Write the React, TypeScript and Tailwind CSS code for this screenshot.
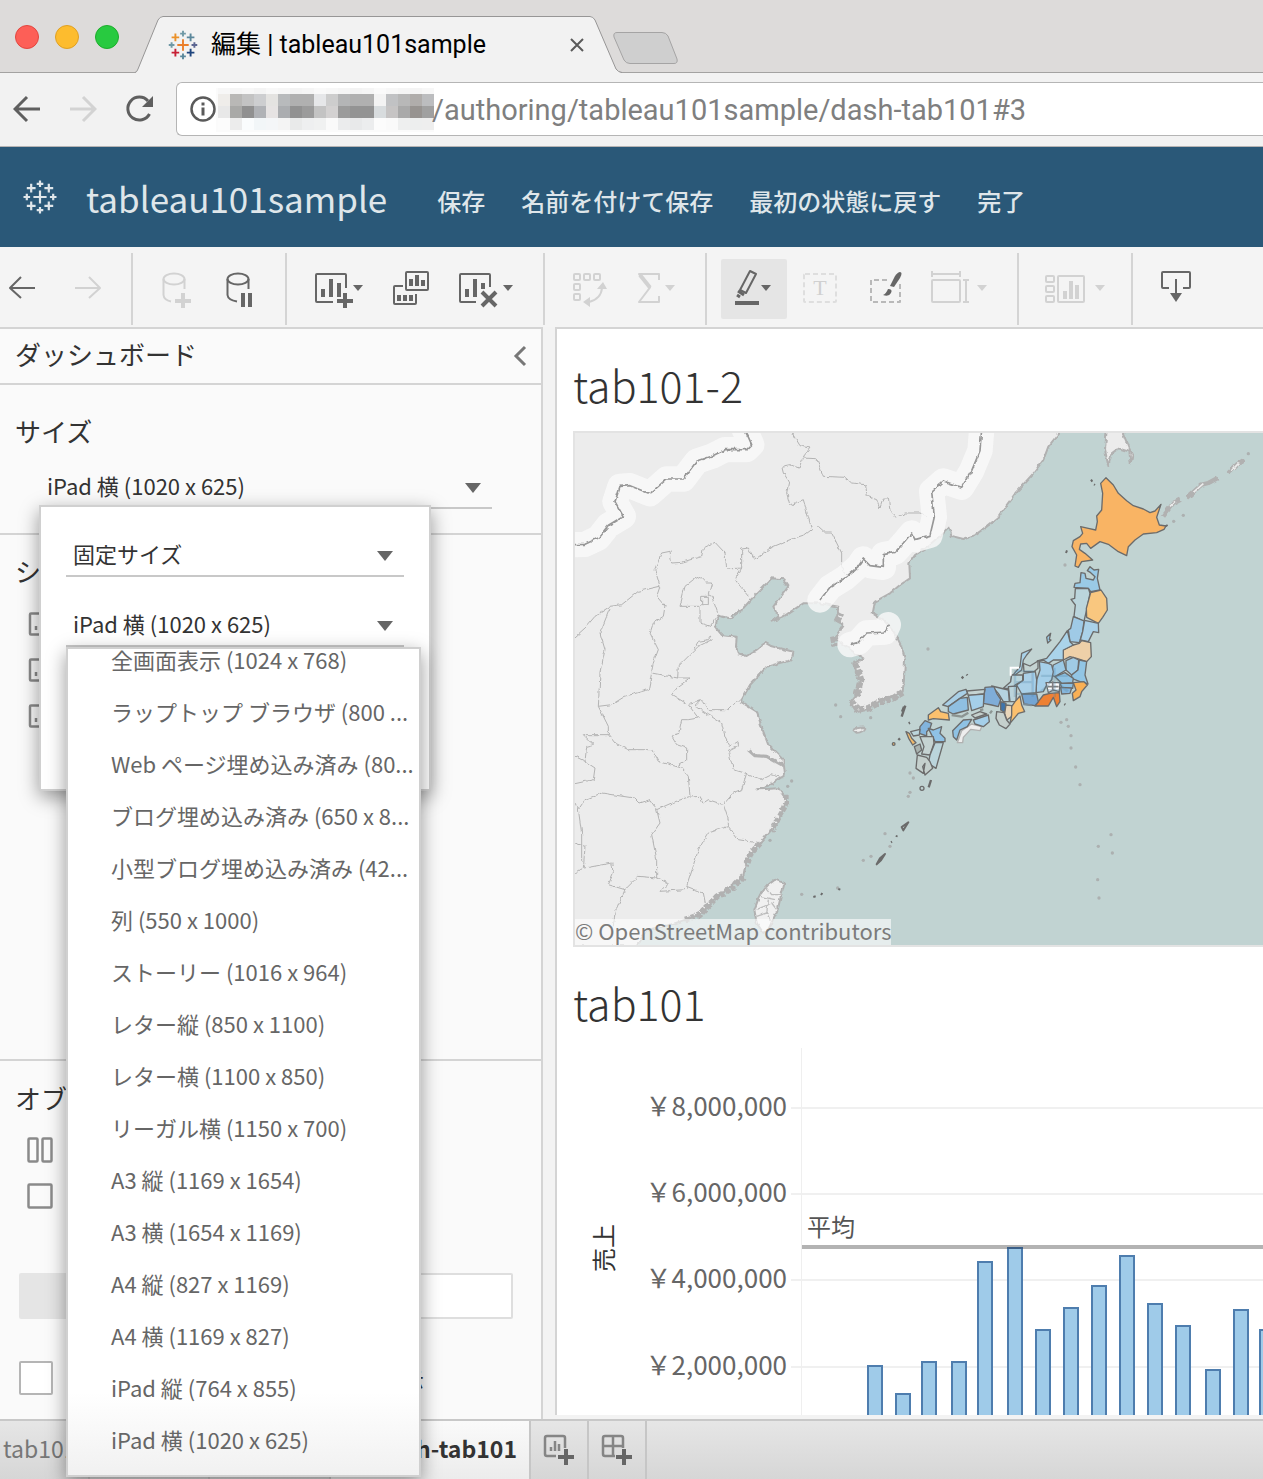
import { useState, type ReactNode } from "react";
import clsx from "clsx";

const sizeOptions = [
  "全画面表示 (1024 x 768)",
  "ラップトップ ブラウザ (800 ...",
  "Web ページ埋め込み済み (80...",
  "ブログ埋め込み済み (650 x 8...",
  "小型ブログ埋め込み済み (42...",
  "列 (550 x 1000)",
  "ストーリー (1016 x 964)",
  "レター縦 (850 x 1100)",
  "レター横 (1100 x 850)",
  "リーガル横 (1150 x 700)",
  "A3 縦 (1169 x 1654)",
  "A3 横 (1654 x 1169)",
  "A4 縦 (827 x 1169)",
  "A4 横 (1169 x 827)",
  "iPad 縦 (764 x 855)",
  "iPad 横 (1020 x 625)",
];

const menuItems = ["保存", "名前を付けて保存", "最初の状態に戻す", "完了"];

/* ---------- Browser window ---------- */

const mosaic = [
  ["#f7f7f7", "#f5f5f5", "#f7f7f7", "#f4f4f4", "#f8f8f8", "#f6f6f6", "#f3f3f3", "#f5f5f5", "#f9f9f9", "#f7f7f7", "#f5f5f5", "#f3f3f3", "#f5f5f5", "#fafafa", "#f7f7f7", "#f5f5f5", "#f4f4f4", "#f7f7f7"],
  ["#efedea", "#b9b8b6", "#c3c3c3", "#cdced0", "#e4e3e1", "#b8babc", "#b0b0b0", "#b0b0b0", "#e6e7e9", "#cdcdcd", "#b4b5b6", "#b0b0b0", "#b0b0b0", "#f3f3f3", "#c1c2c4", "#b8b8b8", "#b0adab", "#bcbdbf"],
  ["#e8e8e8", "#a9a9a7", "#909090", "#b0b2b6", "#e6e3e3", "#abadb0", "#919191", "#9b9b9b", "#c3c3c3", "#d3d1d1", "#9b9b9b", "#939393", "#939393", "#d8dcde", "#c6c4c4", "#a9a9a9", "#979390", "#a0a0a0"],
  ["#fcfcfc", "#ececec", "#fafcfd", "#f2f6f8", "#f4f6f8", "#f4f4f4", "#e9eaea", "#eeeff0", "#f0f1f1", "#fafafa", "#ebeced", "#e8e9ea", "#ecedee", "#fcfcfc", "#fafafa", "#eeefef", "#edeeee", "#eeeeee"],
];

const crosses = [
  { x: 20, y: 20, r: 6, color: "#eb7f2b" },
  { x: 12, y: 12, r: 4, color: "#eb9129" },
  { x: 28, y: 12, r: 4, color: "#5b879b" },
  { x: 12, y: 28, r: 4, color: "#c72035" },
  { x: 28, y: 28, r: 4, color: "#1f457e" },
  { x: 20, y: 8, r: 3, color: "#7099a6" },
  { x: 20, y: 32, r: 3, color: "#59879b" },
  { x: 8, y: 20, r: 3, color: "#7099a6" },
  { x: 32, y: 20, r: 3, color: "#5c6692" },
];

function TableauMark({ className, color }: { className: string; color?: string }) {
  return (
    <svg viewBox="0 0 40 40" className={className} aria-hidden="true">
      {crosses.map((c) => (
        <path
          key={`${c.x}-${c.y}`}
          d={`M${c.x - c.r} ${c.y}h${c.r * 2}M${c.x} ${c.y - c.r}v${c.r * 2}`}
          stroke={color ?? c.color}
          strokeWidth="2"
        />
      ))}
    </svg>
  );
}

function TabStrip() {
  return (
    <div className="relative flex h-[73px] bg-[#dddbda] border-b border-[#a3a2a1]">
      <div className="flex gap-4 pl-[15px] pt-[25px]">
        <span className="size-6 rounded-full border border-[#e2463f] bg-[#fd5f57]" />
        <span className="size-6 rounded-full border border-[#dfa023] bg-[#fdbc2e]" />
        <span className="size-6 rounded-full border border-[#1dad2b] bg-[#28ca40]" />
      </div>
      <div className="relative -mb-px ml-4 h-[73px] w-[487px]">
        <svg viewBox="0 0 487 73" className="absolute inset-0 size-full" aria-hidden="true">
          <path d="M0 73Q2 72 3 69L23 20Q25 16 28 16H455Q458 16 460 20L481 69Q483 72 487 73Z" fill="#f2f2f2" />
          <path d="M0 72.500Q2 72 3 69L23 20Q25 16.500 28 16.500H455Q458 16.500 460 20L481 69Q483 72 487 72.500" fill="none" stroke="#979696" />
        </svg>
        <div className="relative flex h-full items-center pl-[29px] pt-4">
          <TableauMark className="size-[38px]" />
          <span className="ml-[9px] text-[25px] leading-8 text-black">編集 | tableau101sample</span>
          <button aria-label="閉じる" className="absolute right-[37px] top-[37px]">
            <svg width="16" height="16" viewBox="0 0 16 16" aria-hidden="true">
              <path d="M2 2 14 14M14 2 2 14" stroke="#5a5a5a" strokeWidth="2" />
            </svg>
          </button>
        </div>
      </div>
      <button aria-label="新しいタブ" className="-ml-[10px] mt-[31px] h-[34px]">
        <svg width="68" height="34" viewBox="0 0 68 34" aria-hidden="true">
          <path d="M5 1.500H50Q54 1.500 56 5L65 28Q66 32.500 62 32.500H18Q14 32.500 12 29L2 6Q1 1.500 5 1.500Z" fill="#cfcfcf" stroke="#a5a4a4" />
        </svg>
      </button>
    </div>
  );
}

function AddressBar() {
  return (
    <div className="flex h-[74px] items-center border-b border-[#b6b4b4] bg-[#f2f2f2] pb-0.5 pl-[13px]">
      <button aria-label="戻る">
        <svg width="28" height="28" viewBox="0 0 28 28" fill="none" stroke="#5f5f5f" strokeWidth="3" aria-hidden="true">
          <path d="M27 14H3M14 2 2 14 14 26" />
        </svg>
      </button>
      <button aria-label="進む" className="ml-7">
        <svg width="28" height="28" viewBox="0 0 28 28" fill="none" stroke="#d3d3d3" strokeWidth="3" aria-hidden="true">
          <path d="M1 14H25M14 2 26 14 14 26" />
        </svg>
      </button>
      <button aria-label="再読み込み" className="ml-7">
        <svg width="30" height="28" viewBox="0 0 30 28" aria-hidden="true">
          <path d="M24.500 19A11.500 11.500 0 1 1 23 6" fill="none" stroke="#5f5f5f" strokeWidth="3" />
          <path d="M28 1V12H17Z" fill="#5f5f5f" />
        </svg>
      </button>
      <div className="ml-[21px] flex h-[54px] flex-1 items-center overflow-hidden rounded-l-[6px] border border-r-0 border-[#b5b5b5] bg-white pt-0.5">
        <svg width="28" height="28" viewBox="0 0 28 28" className="ml-3 shrink-0" aria-hidden="true">
          <circle cx="14" cy="13" r="11.500" fill="none" stroke="#5a5a5a" strokeWidth="2.500" />
          <path d="M14 11.500V19.500M14 6.500V9.500" stroke="#5a5a5a" strokeWidth="3" />
        </svg>
        <svg width="218" height="44" viewBox="0 0 218 44" className="-ml-px shrink-0" aria-hidden="true">
          <rect width="218" height="44" fill="#fbfbfb" />
          {mosaic.map((row, y) =>
            row.map((color, x) => (
              <rect key={`${x}-${y}`} x={x * 12 + 2} y={[0, 6, 18, 30][y]} width="12" height="12" fill={color} />
            ))
          )}
        </svg>
        <input
          aria-label="アドレス"
          className="-ml-0.5 min-w-0 flex-1 bg-transparent pt-0.5 text-[29px] text-[#7f7f7f] outline-none"
          defaultValue="/authoring/tableau101sample/dash-tab101#3"
        />
      </div>
    </div>
  );
}

/* ---------- Toolbar ---------- */

const DARK = "#666666";
const LIGHT = "#d2d2d2";

function Tool({ label, width, color = DARK, className, children }: { label: string; width: number; color?: string; className?: string; children: ReactNode }) {
  return (
    <button aria-label={label} className={clsx("shrink-0", className)}>
      <svg width={width} height="40" viewBox={`0 2 ${width} 40`} fill="none" stroke={color} strokeWidth="2" strokeLinejoin="round" color={color} aria-hidden="true">
        {children}
      </svg>
    </button>
  );
}

function Caret({ x }: { x: number }) {
  return <path d={`M${x} 18h10l-5 6z`} fill="currentColor" stroke="none" />;
}

function Bars({ d }: { d: string }) {
  return <path d={d} fill="currentColor" stroke="none" />;
}

function Toolbar() {
  const group = "flex shrink-0 items-center border-r-2 border-[#d4d4d4] h-[72px]";
  return (
    <div className="flex h-20 items-center overflow-hidden bg-[#f4f4f4] pt-1">
      <div className={clsx(group, "w-[133px] gap-10 pl-2")}>
        <Tool label="元に戻す" width={27}>
          <path d="M27 21H2M13 10 2 21 13 31" />
        </Tool>
        <Tool label="やり直す" width={27} color={LIGHT}>
          <path d="M0 21H25M14 10 25 21 14 31" />
        </Tool>
      </div>
      <div className={clsx(group, "w-[154px] gap-[34px] pl-[29px]")}>
        <Tool label="データ ソースの追加" width={30} color={LIGHT}>
          <ellipse cx="12" cy="12" rx="10.500" ry="5.500" />
          <path d="M1.500 12V28Q2 33 9 34.500M22.500 12V22" />
          <path d="M21 26V41M13 34H29" strokeWidth="4" />
        </Tool>
        <Tool label="自動更新の一時停止" width={27}>
          <ellipse cx="12" cy="12" rx="10.500" ry="5.500" />
          <path d="M1.500 12V28Q2 33 11 34.500M22.500 12V22" />
          <path d="M17 26V40M24 26V40" strokeWidth="4" />
        </Tool>
      </div>
      <div className={clsx(group, "w-[258px] gap-[29px] pl-[27px]")}>
        <Tool label="新しいワークシート" width={50}>
          <path d="M32 21V8Q32 7 31 7H3Q2 7 2 8V34Q2 35 3 35H19" />
          <Bars d="M7 22h4v8h-4zM15 12h4v18h-4zM23 16h4v14h-4z" />
          <path d="M31 26V41M23 34H39" strokeWidth="4" />
          <Caret x={39} />
        </Tool>
        <Tool label="複製" width={37}>
          <rect x="13" y="5" width="22" height="18" rx="1" />
          <Bars d="M16 12h4v7h-4zM22 8h4v11h-4zM28 13h4v6h-4z" />
          <path d="M10 19H2Q1 19 1 20V36Q1 37 2 37H22Q23 37 23 36V27" />
          <Bars d="M4 28h4v6h-4zM10 28h4v6h-4zM16 28h4v6h-4z" />
        </Tool>
        <Tool label="シートのクリア" width={56}>
          <path d="M31 20V8Q31 7 30 7H2Q1 7 1 8V34Q1 35 2 35H17" />
          <Bars d="M6 22h4v8h-4zM14 12h4v18h-4zM22 16h4v6h-4z" />
          <path d="M23 25 37 39M37 25 23 39" strokeWidth="4" />
          <Caret x={44} />
        </Tool>
      </div>
      <div className={clsx(group, "w-[162px] gap-[29px] pl-7")}>
        <Tool label="行と列の交換" width={35} color={LIGHT}>
          <rect x="1" y="7" width="6" height="6" rx="1" />
          <rect x="11" y="7" width="6" height="6" rx="1" />
          <rect x="21" y="7" width="6" height="6" rx="1" />
          <rect x="1" y="17" width="6" height="6" rx="1" />
          <rect x="1" y="27" width="6" height="6" rx="1" />
          <path d="M29 21Q28 32 16 35" />
          <Bars d="M24 22 30 15 34 22zM17 30V40L10 35z" />
        </Tool>
        <Tool label="集計" width={40} color={LIGHT}>
          <path d="M22 13V7H2L13 20.500 2 35H22V29" />
          <path d="M3 8 13 20.500" strokeWidth="4" />
          <Caret x={28} />
        </Tool>
      </div>
      <div className={clsx(group, "w-[312px] gap-4 pl-[14px]")}>
        <Tool label="強調表示" width={66} className="rounded-[2px] bg-[#e5e5e5] py-[10px]">
          <path d="M29 4 35 7 25 26 19 23Z" />
          <path d="M17 24 23 28M16 28 19 30" strokeWidth="3" />
          <path d="M14 36H38" strokeWidth="4" />
          <Caret x={40} />
        </Tool>
        <Tool label="マーク ラベル" width={50} color="#dedede">
          <rect x="1" y="7" width="32" height="28" rx="1" strokeDasharray="5 3" />
          <text x="17" y="28" textAnchor="middle" fontFamily="Liberation Serif, serif" fontSize="22" fill="#d0d0d0" stroke="none">T</text>
        </Tool>
        <Tool label="書式設定" width={46} color="#b9b9b9">
          <path d="M18 13H2V35H31V17" strokeDasharray="5 3" />
          <path d="M31 5Q34 5 31 11L25 20 21 19 26 9Q29 5 31 5Z" fill={DARK} stroke="none" />
          <path d="M19 22Q24 22 22 26 20 30 14 28 17 27 19 22Z" fill={DARK} stroke="none" />
        </Tool>
        <Tool label="表示サイズ" width={58} color={LIGHT}>
          <rect x="1" y="13" width="28" height="22" rx="1" />
          <path d="M1 7H29M1 4V10M29 4V10M35 13V36M32 13H38M32 35H38" />
          <Caret x={46} />
        </Tool>
      </div>
      <div className={clsx(group, "w-[114px] pl-[26px]")}>
        <Tool label="カードの表示" width={62} color={LIGHT}>
          <rect x="1" y="9" width="8" height="6" rx="1" />
          <rect x="1" y="19" width="8" height="6" rx="1" />
          <rect x="1" y="29" width="8" height="6" rx="1" />
          <rect x="13" y="9" width="26" height="26" rx="1" />
          <Bars d="M18 24h4v8h-4zM24 14h4v18h-4zM30 18h4v14h-4z" />
          <Caret x={50} />
        </Tool>
      </div>
      <div className="pl-7">
        <Tool label="ダウンロード" width={31}>
          <path d="M8 23H2Q1 23 1 22V8Q1 7 2 7H28Q29 7 29 8V22Q29 23 28 23H22M15 14V30" />
          <Bars d="M9 28h12l-6 9z" />
        </Tool>
      </div>
    </div>
  );
}

/* ---------- Side panel ---------- */

function SelectField({ label, value, className }: { label: string; value: string; className?: string }) {
  return (
    <div className={clsx("relative border-b-2 border-[#c8c8c8]", className)}>
      <select aria-label={label} className="h-10 w-full appearance-none bg-transparent px-[7px] pb-1 text-[22px] text-[#333] outline-none">
        <option>{value}</option>
      </select>
      <svg width="16" height="10" viewBox="0 0 16 10" className="pointer-events-none absolute right-[11px] top-4" aria-hidden="true">
        <path d="M0 0h16l-8 10z" fill="#666" />
      </svg>
    </div>
  );
}

function SheetIcon() {
  return (
    <svg width="24" height="24" viewBox="0 0 24 24" fill="none" stroke="#8a8a8a" strokeWidth="2.500" aria-hidden="true">
      <rect x="2" y="1.500" width="20" height="21" rx="1" />
      <path d="M8 14V18M13 7V18M18 11V18" />
    </svg>
  );
}

function SizePopup() {
  const [picked, setPicked] = useState(sizeOptions.length - 1);
  return (
    <div className="absolute left-[39px] top-[120px] z-20 h-[286px] w-[392px] border-2 border-[#d0d0d0] bg-white px-[25px] pt-7 shadow-[0_6px_18px_rgba(0,0,0,0.4)]">
      <SelectField label="サイズの種類" value="固定サイズ" />
      <SelectField label="固定サイズ" value="iPad 横 (1020 x 625)" className="mt-7" />
      <ul className="relative flex h-[830px] w-[355px] flex-col justify-end overflow-hidden border-2 border-[#d0d0d0] bg-gradient-to-b from-white from-90% to-[#f1f1f1] pb-[7px] shadow-[0_6px_18px_rgba(0,0,0,0.4)]">
        {sizeOptions.map((name, i) => (
          <li key={name} className="h-[52px] shrink-0">
            <button
              aria-pressed={picked === i}
              onClick={() => setPicked(i)}
              className="h-full w-full whitespace-nowrap pb-[6px] pl-[43px] text-left text-[22px] text-[#666]"
            >
              {name}
            </button>
          </li>
        ))}
      </ul>
    </div>
  );
}

function SidePanel() {
  const heading = "pb-1 text-[26px] leading-8 text-[#333]";
  return (
    <aside className="flex w-[543px] shrink-0 flex-col border-r-2 border-t-2 border-[#d4d4d4] bg-[#fafafa]">
      <div className="flex h-14 items-center justify-between border-b-2 border-[#d4d4d4] pl-[15px] pr-[14px]">
        <h2 className={heading}>ダッシュボード</h2>
        <button aria-label="折りたたむ">
          <svg width="14" height="22" viewBox="0 0 14 22" aria-hidden="true">
            <path d="M12 2 3 11 12 20" fill="none" stroke="#777" strokeWidth="3" />
          </svg>
        </button>
      </div>
      <section className="relative h-[150px] border-b-2 border-[#d4d4d4] pt-[30px]">
        <h3 className={clsx(heading, "pl-[15px]")}>サイズ</h3>
        <SelectField label="サイズ" value="iPad 横 (1020 x 625)" className="ml-10 mt-4 w-[452px]" />
        <SizePopup />
      </section>
      <section className="flex-1 border-b-2 border-[#d4d4d4] pt-5">
        <h3 className={clsx(heading, "pl-[15px]")}>シート</h3>
        <div className="flex flex-col gap-[22px] pl-7 pt-[21px]">
          <SheetIcon />
          <SheetIcon />
          <SheetIcon />
        </div>
      </section>
      <section className="h-[358px] pt-[21px]">
        <h3 className={clsx(heading, "pl-[15px]")}>オブジェクト</h3>
        <div className="flex flex-col gap-5 pl-[27px] pt-[19px]">
          <svg width="26" height="26" viewBox="0 0 26 26" fill="none" stroke="#8a8a8a" strokeWidth="2.500" aria-hidden="true">
            <rect x="1.500" y="1.500" width="9" height="23" rx="1" />
            <rect x="15.500" y="1.500" width="9" height="23" rx="1" />
          </svg>
          <svg width="26" height="26" viewBox="0 0 26 26" fill="none" stroke="#8a8a8a" strokeWidth="2.500" aria-hidden="true">
            <rect x="1.500" y="1.500" width="23" height="23" rx="1" />
          </svg>
        </div>
        <div className="ml-[19px] mt-16 flex h-[46px] w-[494px]">
          <button aria-label="タイル" className="w-1/2 rounded-l-[2px] bg-[#e5e5e5]" />
          <button aria-label="浮動" className="w-1/2 rounded-r-[2px] border-2 border-[#dedede] bg-white" />
        </div>
        <label className="ml-[19px] mt-[42px] flex w-[405px] items-center justify-between whitespace-nowrap text-[22px] text-[#333]">
          <input type="checkbox" className="size-[34px] appearance-none rounded-[2px] border-2 border-[#b5b5b5] bg-white" />
          タイトルを表示
        </label>
      </section>
    </aside>
  );
}

/* ---------- Map ---------- */

const prefectures = [
  { name: "aomori", fill: "#9acae6", d: "M603 38 615 40 618 55 640 60 645 50 632 38 622 32 630 20 642 30 656 28 652 55 660 90 632 95 625 85 582 82 585 70 600 68Z" },
  { name: "akita", fill: "#bbd5dc", d: "M586 86 625 85 630 100 620 150 612 183 582 170 586 135 573 118 584 115Z" },
  { name: "iwate", fill: "#f9c77f", d: "M632 98 663 90 680 115 682 150 668 172 655 190 620 172 619 145Z" },
  { name: "yamagata", fill: "#9fcae6", d: "M580 170 612 183 608 215 598 248 570 245 565 210 572 205Z" },
  { name: "miyagi", fill: "#aad1e8", d: "M614 181 655 190 656 218 640 215 625 245 601 240 608 215Z" },
  { name: "fukushima", fill: "#eed0a8", d: "M550 270 580 255 598 250 605 242 632 248 634 290 620 305 590 295 570 290 550 300Z" },
  { name: "niigata", fill: "#aad3ea", d: "M562 212 570 245 580 255 550 270 550 300 520 300 505 310 490 300 472 303 500 295 520 270 540 245Z" },
  { name: "tochigi", fill: "#a0cbe5", d: "M558 302 580 292 596 300 594 330 575 345 558 330Z" },
  { name: "ibaraki", fill: "#92c5e4", d: "M598 300 620 305 615 345 624 372 600 365 575 355 575 345 594 330Z" },
  { name: "gunma", fill: "#9bc9e5", d: "M520 315 550 300 558 330 525 350 512 345Z" },
  { name: "saitama", fill: "#8fc2e2", d: "M525 350 555 338 580 355 578 368 545 370Z" },
  { name: "chiba", fill: "#f9b055", d: "M580 368 612 365 622 375 605 395 600 410 580 422 577 400 588 390Z" },
  { name: "tokyo", fill: "#8cbfe2", d: "M540 370 580 370 578 385 545 382Z" },
  { name: "kanagawa", fill: "#86b6dc", d: "M542 382 575 384 570 400 545 402Z" },
  { name: "nagano", fill: "#a5cfe9", d: "M478 305 505 310 515 315 520 335 515 360 500 375 490 395 468 398 470 360 480 330Z" },
  { name: "yamanashi", fill: "#ffffff", d: "M498 368 540 368 538 395 520 390 505 398Z" },
  { name: "shizuoka", fill: "#ee8134", d: "M465 438 475 425 490 405 510 400 538 398 540 425 530 440 520 412 505 438Z" },
  { name: "aichi", fill: "#74a5d3", d: "M425 402 470 402 475 425 465 437 432 432Z" },
  { name: "gifu", fill: "#aad0e8", d: "M430 340 466 335 470 360 468 398 425 402 410 375 430 360Z" },
  { name: "toyama", fill: "#c5d3d2", d: "M430 310 450 318 474 303 474 325 462 335 432 335Z" },
  { name: "ishikawa", fill: "#aad3ea", d: "M425 280 455 267 440 285 430 300 425 330 405 345 392 365 395 350 420 320Z" },
  { name: "fukui", fill: "#bbd5dc", d: "M395 345 428 345 428 362 405 375 400 385 370 385 392 365Z" },
  { name: "shiga", fill: "#bbd5dc", d: "M385 380 410 378 408 425 390 425Z" },
  { name: "kyoto", fill: "#b5d3e0", d: "M335 378 385 390 388 425 370 425 355 400Z" },
  { name: "hyogo", fill: "#7fadd8", d: "M315 382 342 380 350 400 362 418 355 440 335 435 310 430Z" },
  { name: "osaka", fill: "#3f74ab", d: "M362 425 378 430 375 458 362 450Z" },
  { name: "nara", fill: "#e8d5ba", d: "M378 435 395 437 395 470 380 480 374 460Z" },
  { name: "mie", fill: "#fbc06e", d: "M405 425 420 408 425 435 434 455 415 460 390 490 395 465 395 440Z" },
  { name: "wakayama", fill: "#c5d0cd", d: "M350 455 372 458 380 480 390 492 378 506 358 495 348 475Z" },
  { name: "tottori", fill: "#c5d3d2", d: "M260 393 315 388 312 402 265 406Z" },
  { name: "shimane", fill: "#a9cfe6", d: "M188 435 235 395 258 388 262 400 240 415 205 440Z" },
  { name: "okayama", fill: "#a5cfe9", d: "M265 406 312 402 310 440 275 452Z" },
  { name: "hiroshima", fill: "#8fbfe1", d: "M205 440 240 415 262 412 265 450 220 462 205 455Z" },
  { name: "yamaguchi", fill: "#fbc06e", d: "M145 465 175 443 182 455 205 460 208 480 160 476 145 480Z" },
  { name: "ehime", fill: "#8fc2e4", d: "M218 512 250 480 275 478 262 500 240 510 230 540 220 530Z" },
  { name: "tokushima", fill: "#a5cfe9", d: "M280 480 325 465 328 485 310 500 285 492Z" },
  { name: "kagawa", fill: "#c5d0cd", d: "M275 465 300 455 320 462 285 474Z" },
  { name: "fukuoka", fill: "#82b4dd", d: "M120 500 135 482 155 490 150 505 140 515 140 528 118 520Z" },
  { name: "oita", fill: "#8fc2e6", d: "M145 505 160 510 185 500 180 520 195 535 195 545 165 545Z" },
  { name: "saga", fill: "#bbd5dc", d: "M92 515 120 508 118 525 100 528Z" },
  { name: "nagasaki", fill: "#f2bb6c", d: "M78 515 88 520 95 535 108 548 98 555 86 535Z" },
  { name: "kumamoto", fill: "#c5d3d2", d: "M120 530 160 530 162 550 150 585 125 582 132 560Z" },
  { name: "amakusa", fill: "#a9b3b0", d: "M103 560 120 552 125 570 110 582Z" },
  { name: "miyazaki", fill: "#bbd5dc", d: "M165 548 190 548 175 600 168 625 145 610 150 585Z" },
  { name: "kagoshima", fill: "#c5d0cd", d: "M112 585 140 592 150 605 158 625 135 645 128 620 135 610 130 640 108 625Z" },
  { name: "sado", fill: "#9acae6", d: "M500 232 512 220 508 238 513 240 503 249Z" },
];

const mainland =
  "M1452-10 1452 0 1420 41 1405 81 1375 121 1325 176 1295 216 1270 253 1235 281 1200 306 1165 318 1130 309 1123 283 1095 311 1060 341 1020 366 1003 391 1005 436 975 456 945 481 900 506 893 541 930 566 960 601 980 641 990 681 987 741 983 776 955 791 915 801 885 826 850 836 825 811 845 786 855 741 835 691 865 676 840 660 785 621 775 621 805 576 785 566 790 521 735 511 685 511 625 551 590 566 610 551 595 521 640 461 625 439 590 436 545 481 500 531 465 556 430 548 420 581 440 606 485 611 483 641 490 661 515 669 545 650 570 629 590 640 655 656 650 681 575 701 525 756 497 806 545 836 565 896 580 936 625 981 630 1026 585 1056 545 1069 610 1066 635 1101 610 1166 555 1231 515 1281 505 1331 425 1391 375 1446 285 1476 215 1491 185 1540-10 1540-10-10Z";

const countryBorders = [
  "M-40 336 30 334 70 315 100 277 145 250 120 206 135 160 165 158 225 182 275 138 325 138 365 85 410 70 450 50 515 50 530 35 520 12 508-10",
  "M735 501 765 463 810 435 850 400 865 378 885 398 925 403 925 365 960 358 985 330 1010 300 1020 320 1065 307 1078 252 1070 175 1105 144 1160 163 1190 113 1215 53 1220-10",
  "M825 635 850 628 875 600 930 597 940 575",
];

const provinces = [
  "M652 0 675 38 705 45 682 75 725 77 745 130 810 133 830 150 872 155 877 190 905 200 915 225 925 195 940 195 945 235 965 255 990 240 1035 240 1060 250",
  "M682 78 672 105 645 95 620 100 625 120 642 145 635 180 645 217 685 200 705 270 710 290 690 305 650 318 585 345 540 380 520 345 500 348 500 405 455 408 450 360 420 328 385 345 380 370 320 388 290 390 285 355 260 360 240 410 255 460 190 475 140 515 105 520 60 550 30 585 0 612",
  "M730 280 752 300 770 300 800 360 800 400 815 430",
  "M500 405 480 440 520 490",
  "M255 460 245 490 270 520 265 550 235 570 225 600 250 650 235 690 230 715",
  "M105 525 95 550 75 600 90 650 75 720 70 820 100 880 100 905",
  "M375 430 395 450 410 450 400 485 410 490 430 545 405 580 375 570 375 520 345 520 315 520 330 460 355 440Z",
  "M380 490H400V515H380Z",
  "M410 606 400 620 370 625 355 650M410 620 370 640 345 665 310 700 308 735",
  "M70 820 110 815 150 790 220 770 230 720 308 735 345 735 310 760 290 785 340 815 370 855 340 860 320 860 310 905 290 910 305 935 335 945 335 980 305 1000",
  "M100 905 120 930 160 950 230 950 250 985 320 1005 340 1030 345 1090 290 1110 245 1130 225 1100 195 1110 180 1095 80 1080 30 1100 10 1130 0 1110",
  "M340 815 375 805 360 820 400 845 440 870 450 910 465 940 490 925 490 940 460 955 475 1010 510 1020 560 1040 590 1025 625 1035",
  "M375 805 365 805 370 800 385 805 400 830 460 830 475 815 497 795",
  "M515 1020 500 1070 475 1080 445 1115 400 1100 385 1110 375 1090 345 1092",
  "M445 1115 460 1160 460 1180 490 1220 550 1230",
  "M460 1180 400 1200 370 1250 355 1300 335 1360 385 1380 395 1430",
  "M245 1130 255 1170 230 1205 245 1280 245 1335 280 1350 255 1375 330 1370",
  "M10 1130 20 1200 20 1280 30 1305 110 1290 115 1320 100 1355 150 1370 190 1330 245 1335M150 1370 120 1440 115 1480",
  "M0 970 30 985 60 1005 55 1040 0 1052M30 985 35 940 55 935 25 905 100 905",
  "M0 1230 30 1240 25 1305 0 1320",
];

const islets = [
  [797, 851], [782, 816], [887, 854], [1059, 648], [1458, 868], [1475, 860], [1480, 880], [1488, 908], [1488, 945], [1502, 1002], [1515, 1055],
  [1470, 396], [1796, 265], [2020, 62], [1825, 247], [1005, 1020], [1015, 1035], [1005, 1078], [1000, 1090], [650, 1044], [638, 1060], [585, 1222],
  [865, 1282], [888, 1270], [930, 1202], [945, 1240], [680, 1384], [788, 1365], [1570, 1240], [1608, 1205], [1612, 1260], [1568, 1340], [1572, 1395],
];

function MapView() {
  return (
    <div className="relative overflow-hidden border-2 border-r-0 border-[#e3e3e3]">
      <svg viewBox="0 0 2064 1536" preserveAspectRatio="xMinYMin slice" className="h-[512px] w-full" role="img" aria-label="日本地図">
        <defs>
          <filter id="rough" x="0" y="0" width="1" height="1">
            <feTurbulence type="fractalNoise" baseFrequency="0.06" numOctaves="2" seed="4" />
            <feDisplacementMap in="SourceGraphic" scale="12" xChannelSelector="R" yChannelSelector="G" />
          </filter>
        </defs>
        <rect x="-20" y="-20" width="2300" height="1600" fill="#c1d3d2" />
        <g filter="url(#rough)" strokeLinejoin="round" fill="none">
          <path d={mainland} fill="#ececec" stroke="#b1b1b1" strokeWidth="6" />
          <path d="M635 1085 635 1110 612 1150 590 1195M555 1231 525 1265 515 1300M505 1331 470 1365 425 1391 375 1446 330 1460" stroke="#b1b1b1" strokeWidth="18" strokeDasharray="14 5" />
          <path d="M983 778 955 796 915 806 880 826 850 832 832 805M845 786 858 741 840 685M785 566 798 540M775 610 780 640" stroke="#b1b1b1" strokeWidth="20" strokeDasharray="16 5" />
          <path d="M520 950 540 968 575 970 625 998" stroke="#b1b1b1" strokeWidth="10" />
          <path d="M835 892Q850 880 872 884 866 898 845 900Z" fill="#ececec" stroke="#b1b1b1" strokeWidth="5" />
          <path d="M600 1340 628 1350 620 1380 608 1430 580 1490 565 1500 545 1470 538 1430 555 1385 580 1355Z" fill="#f0f0f0" stroke="#b1b1b1" strokeWidth="6" />
          <path d="M570 1360 590 1385 622 1385M555 1390 600 1400M545 1430 590 1410 605 1430M545 1450 575 1440 590 1470M575 1440 580 1400" stroke="#bdbdbd" strokeWidth="4" />
          <path d="M1595-10 1590 51 1600 99 1610 61 1630 46 1663 56 1667 91 1673 66 1660 41 1640-10Z" fill="#ececec" stroke="#b1b1b1" strokeWidth="6" />
          <path d="M1765 250 1795 210 1815 200M1835 195 1880 155 1900 150 1928 135M1960 120 1985 95 2008 80" stroke="#b1b1b1" strokeWidth="13" />
          <path d="M1785 220 1800 205M1855 178 1885 152M1970 113 1990 92" stroke="#ececec" strokeWidth="5" />
          {provinces.map((d) => (
            <path key={d} d={d} stroke="#b3b3b3" strokeWidth="3" />
          ))}
        </g>
        {/* halo stays smooth, only the border line itself is jagged */}
        <g fill="none" stroke="#fafafa" strokeOpacity="0.8" strokeWidth="76" strokeLinecap="round" strokeLinejoin="round">
          {countryBorders.map((d) => (
            <path key={d} d={d} />
          ))}
        </g>
        <g filter="url(#rough)" fill="none" stroke="#979797" strokeWidth="5" strokeLinejoin="round">
          <path d={countryBorders.join("")} />
          <path d="M0 0H1M2063 1535H2064" stroke="none" />
        </g>
        {islets.map(([x, y]) => (
          <circle key={`${x}-${y}`} cx={x} cy={y} r="5" fill="#acb0b0" />
        ))}
        <g strokeLinejoin="round" stroke="#6b6b6b" strokeWidth="4">
          <path
            d="M1593 134 1615 156 1630 181 1655 203 1675 218 1705 228 1725 239 1740 234 1758 214 1745 253 1753 276 1773 279 1767 289 1745 299 1705 303 1680 321 1660 341 1655 368 1630 356 1600 334 1575 326 1547 346 1535 331 1517 333 1513 349 1530 361 1553 381 1520 386 1510 403 1500 399 1505 366 1491 341 1495 323 1515 311 1523 301 1517 281 1540 286 1562 291 1567 266 1565 249 1580 231 1583 181 1577 151Z"
            fill="#f9b464"
          />
          <g transform="translate(915 381)">
            <path d="M232 548 245 512 275 492 305 500 300 512 272 508 250 532 248 548Z" fill="#eeeeee" stroke="#b1b1b1" />
            {prefectures.map((p) => (
              <path key={p.name} d={p.d} fill={p.fill} />
            ))}
            <path d="M65 470 76 437M66 455 72 440" strokeWidth="7" />
            <circle cx="41" cy="552" r="4" fill="#f2bb6c" />
            <circle cx="126" cy="685" r="6" fill="none" />
            <path d="M146 682 153 660M55 540 60 535M86 490 90 488M245 355 250 350M260 343 262 346M553 432 556 434" strokeWidth="7" />
            <path d="M215 465 245 470 265 458M300 450 310 448M330 460 336 452" fill="none" stroke="#8c9492" strokeWidth="7" />
            <path d="M430 433 455 436" stroke="#7a8c98" strokeWidth="6" />
            <path d="M518 364V394M503 380H536" stroke="#808080" strokeWidth="5" />
          </g>
          <path d="M1548 140 1552 146M1557 154 1560 156M1473 360 1476 352M1771 280 1778 276" strokeWidth="6" />
          <path d="M980 1182 1000 1168 985 1192ZM966 1207 964 1212M948 1228 951 1226M905 1294 915 1276 930 1263 918 1282ZM715 1392 722 1390M738 1386 742 1380M790 1368 796 1370" fill="none" strokeWidth="6" />
        </g>
        <path d="M1307 728V704H1332" fill="none" stroke="#fff" strokeWidth="6" />
        <text x="1300" y="784" fontSize="92" fill="#5588a8" fillOpacity="0.28">日本</text>
      </svg>
      <a href="#osm" className="absolute bottom-0 left-0 bg-white/60 pb-1 text-[22px] leading-[22px] text-[#7b7b7b]">
        © OpenStreetMap contributors
      </a>
    </div>
  );
}

/* ---------- Bar chart ---------- */

const bars = [
  [294, 317], [322, 345], [348, 313], [378, 313], [404, 213], [434, 199], [462, 281], [490, 259],
  [518, 237], [546, 207], [574, 255], [602, 277], [632, 321], [660, 261], [686, 281],
];

const ticks = [
  { y: 60, label: "￥8,000,000" },
  { y: 146, label: "￥6,000,000" },
  { y: 232, label: "￥4,000,000" },
  { y: 319, label: "￥2,000,000" },
];

function SalesChart() {
  return (
    <div className="relative min-h-[367px] flex-1 overflow-hidden">
      <svg width="2000" height="367" viewBox="0 0 2000 367" className="absolute" role="img" aria-label="売上">
        {ticks.map((t) => (
          <g key={t.y}>
            <path d={`M218 ${t.y}H2000`} stroke="#f0f0f0" strokeWidth="2" />
            <text x="214" y={t.y + 8} textAnchor="end" fontSize="26" fill="#666">
              {t.label}
            </text>
          </g>
        ))}
        <path d="M228.500 0V367" stroke="#efefef" />
        <text transform="translate(40 200) rotate(-90)" textAnchor="middle" fontSize="24" fill="#333">
          売上
        </text>
        {bars.map(([x, y]) => (
          <rect key={x} x={x + 1} y={y + 1} width="14" height={400 - y} fill="#9fcbe9" stroke="#4e7dae" strokeWidth="2" />
        ))}
        <path d="M229 199H2000" stroke="#b3b3b3" strokeWidth="4" />
        <path d="M434 200H450" stroke="#3b5f88" strokeWidth="2" />
        <text x="234" y="188" fontSize="24" fill="#555">
          平均
        </text>
      </svg>
    </div>
  );
}

/* ---------- Sheet tabs ---------- */

function SheetTabs() {
  const tab = "flex h-full items-center border-r-2 border-[#c6c6c6] whitespace-nowrap text-[23px]";
  return (
    <nav className="flex h-[60px] border-t-2 border-[#c8c8c8] bg-gradient-to-b from-[#e6e6e6] to-[#d6d6d6]">
      <button className={clsx(tab, "w-[90px] pb-1 pl-[3px] text-[#777]")}>tab101</button>
      <button aria-label="tab101-2" className={clsx(tab, "w-[120px]")} />
      <button aria-label="tab101-3" className={clsx(tab, "w-[121px]")} />
      <button className={clsx(tab, "w-[200px] justify-end bg-gradient-to-b from-[#fafafa] to-[#ececec] pb-1 pr-3 font-bold text-[#333]")}>dash-tab101</button>
      <button aria-label="新しいワークシート" className={clsx(tab, "w-[58px] justify-center")}>
        <svg width="32" height="32" viewBox="0 0 32 32" fill="none" stroke="#858585" strokeWidth="2.500" aria-hidden="true">
          <path d="M22 14V4Q22 2 20 2H4Q2 2 2 4V20Q2 22 4 22H13" />
          <path d="M8 13V17M12 7V17M16 10V17" />
          <path d="M23 15V31M15 23H31" stroke="#666" strokeWidth="4" />
        </svg>
      </button>
      <button aria-label="新しいダッシュボード" className={clsx(tab, "w-[58px] justify-center")}>
        <svg width="32" height="32" viewBox="0 0 32 32" fill="none" stroke="#858585" strokeWidth="2.500" aria-hidden="true">
          <path d="M22 14V4Q22 2 20 2H4Q2 2 2 4V20Q2 22 4 22H14M12 2V22M2 12H22" />
          <path d="M23 15V31M15 23H31" stroke="#666" strokeWidth="4" />
        </svg>
      </button>
    </nav>
  );
}

export default function App() {
  return (
    <div className="flex min-h-screen flex-col overflow-hidden bg-[#f3f3f3] font-['Noto_Sans_CJK_JP',sans-serif]">
      <div className="font-['Roboto','Noto_Sans_CJK_JP',sans-serif]">
        <TabStrip />
        <AddressBar />
      </div>
      <header className="flex h-[100px] items-center bg-[#2a5878] pl-[18px] text-[#dfe6ea]">
        <TableauMark className="size-11" color="#dfe6ea" />
        <h1 className="ml-6 mt-0.5 text-[35px] leading-10">tableau101sample</h1>
        <nav className="ml-[50px] flex gap-9 pt-2 text-[24px] font-medium leading-8">
          {menuItems.map((item) => (
            <button key={item}>{item}</button>
          ))}
        </nav>
      </header>
      <Toolbar />
      <div className="flex flex-1 gap-3">
        <SidePanel />
        <main className="mb-1 flex min-w-0 flex-1 flex-col border-l-2 border-t-2 border-[#d4d4d4] bg-white pl-4">
          <h2 className="pb-6 pt-8 text-[43px] font-light leading-[46px] text-[#333]">tab101-2</h2>
          <MapView />
          <h2 className="pb-[23px] pt-8 text-[43px] font-light leading-[46px] text-[#333]">tab101</h2>
          <SalesChart />
        </main>
      </div>
      <SheetTabs />
    </div>
  );
}
